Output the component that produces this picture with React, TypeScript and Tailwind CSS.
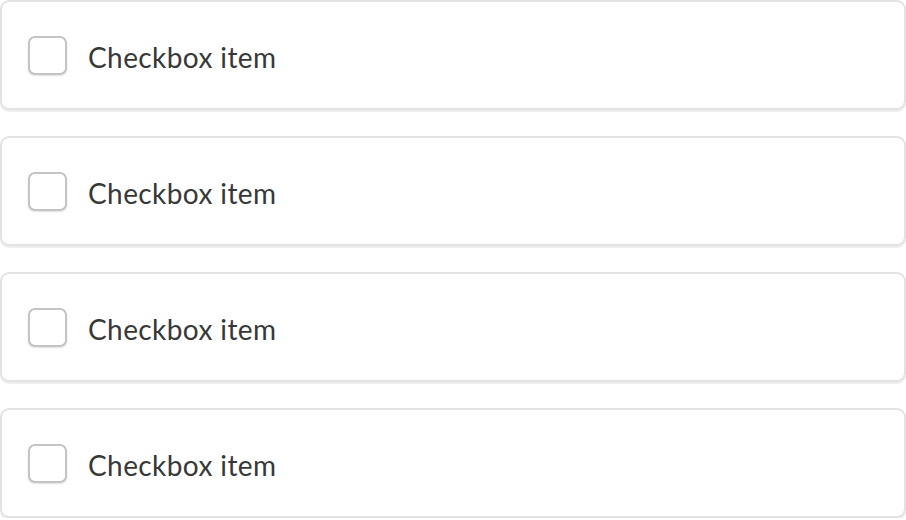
import React from "react";

const items = ["Checkbox item", "Checkbox item", "Checkbox item", "Checkbox item"];

function CheckboxCard({ label }: { label: string }) {
  return (
    <label className="flex h-[110px] items-center gap-[21px] rounded-[9px] border-2 border-[#e3e3e3] bg-white pl-[26px] shadow-[0_2px_1px_rgba(0,0,0,0.07)]">
      <span className="h-[39px] w-[39px] shrink-0 rounded-[7px] border-2 border-[#c4c4c4] bg-white shadow-[0_1px_2px_rgba(0,0,0,0.12)]" />
      <span
        className="pt-[3px] text-[28px] leading-none tracking-[0.4px] text-[#383838]"
        style={{ fontFamily: "Lato, 'Noto Sans', sans-serif" }}
      >
        {label}
      </span>
    </label>
  );
}

export default function App() {
  return (
    <div className="flex w-[906px] flex-col gap-[26px] bg-white">
      {items.map((label, i) => (
        <CheckboxCard key={i} label={label} />
      ))}
    </div>
  );
}
